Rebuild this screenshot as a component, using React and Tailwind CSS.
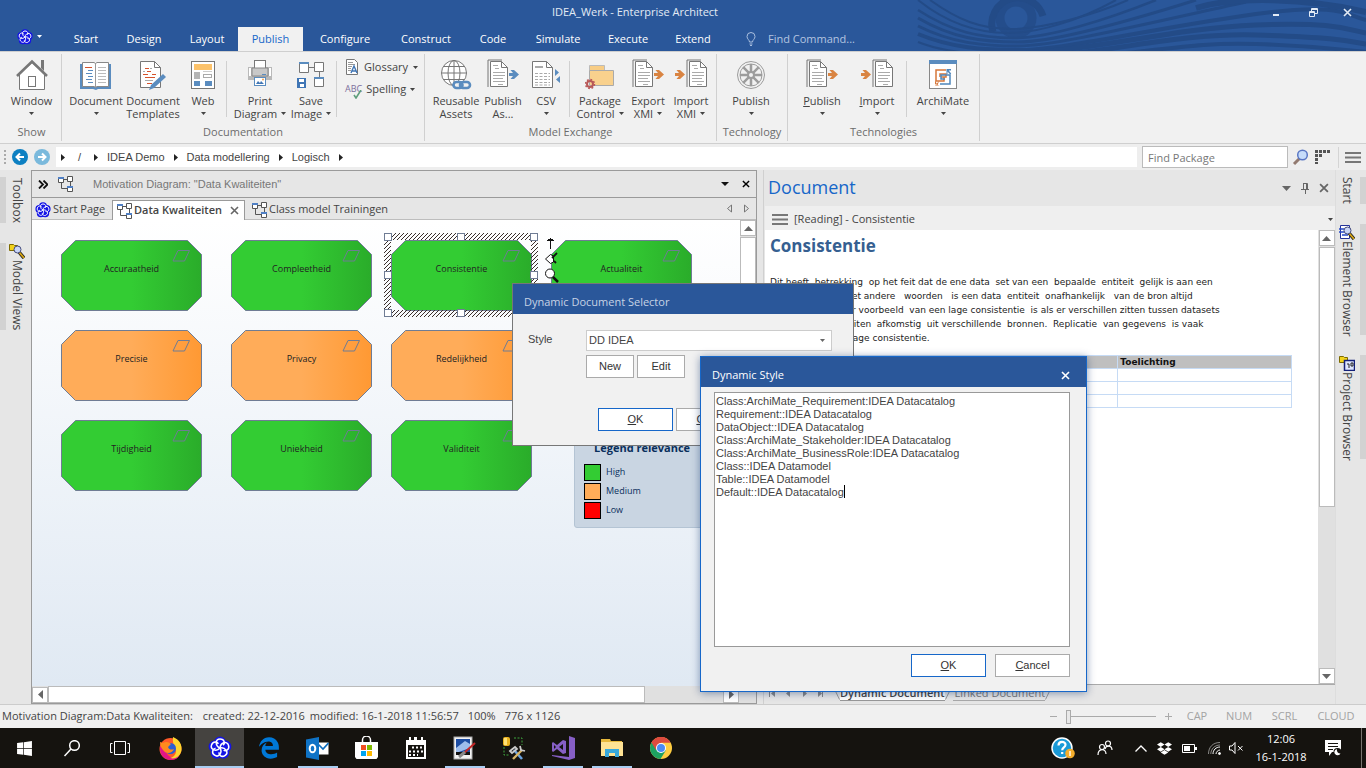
import { FaWindows, FaDropbox, FaEdgeLegacy } from 'react-icons/fa';

const TABS = [
    { name: 'Start', width: 'w-[52px]' },
    { name: 'Design', width: 'w-[64px]' },
    { name: 'Layout', width: 'w-[62px]' },
    { name: 'Publish', width: 'w-[65px]', active: true },
    { name: 'Configure', width: 'w-[84px]' },
    { name: 'Construct', width: 'w-[78px]' },
    { name: 'Code', width: 'w-[56px]' },
    { name: 'Simulate', width: 'w-[74px]' },
    { name: 'Execute', width: 'w-[66px]' },
    { name: 'Extend', width: 'w-[64px]' },
];

const NODES = [
    { name: 'Accuraatheid', color: 'green', pos: 'left-[29px] top-[20px]' },
    { name: 'Compleetheid', color: 'green', pos: 'left-[199px] top-[20px]' },
    { name: 'Consistentie', color: 'green', pos: 'left-[359px] top-[20px]' },
    { name: 'Actualiteit', color: 'green', pos: 'left-[519px] top-[20px]' },
    { name: 'Precisie', color: 'orange', pos: 'left-[29px] top-[110px]' },
    { name: 'Privacy', color: 'orange', pos: 'left-[199px] top-[110px]' },
    { name: 'Redelijkheid', color: 'orange', pos: 'left-[359px] top-[110px]' },
    { name: 'Tijdigheid', color: 'green', pos: 'left-[29px] top-[200px]' },
    { name: 'Uniekheid', color: 'green', pos: 'left-[199px] top-[200px]' },
    { name: 'Validiteit', color: 'green', pos: 'left-[359px] top-[200px]' },
];

const STYLE_LINES = [
    'Class:ArchiMate_Requirement:IDEA Datacatalog',
    'Requirement::IDEA Datacatalog',
    'DataObject::IDEA Datacatalog',
    'Class:ArchiMate_Stakeholder:IDEA Datacatalog',
    'Class:ArchiMate_BusinessRole:IDEA Datacatalog',
    'Class::IDEA Datamodel',
    'Table::IDEA Datamodel',
    'Default::IDEA Datacatalog',
];

const DOC_LINES = [
    'Dit heeft  betrekking  op het feit dat de ene data  set van een  bepaalde  entiteit  gelijk is aan een',
    'andere dataset. Met andere   woorden   is een data  entiteit  onafhankelijk   van de bron altijd',
    'gelijk is. Een ander voorbeeld  van een lage consistentie  is als er verschillen zitten tussen datasets',
    'waarin deze entiteiten  afkomstig  uit verschillende  bronnen.  Replicatie  van gegevens  is vaak',
    'een indicatie van lage consistentie.',
];

/* ---------- small drawings ---------- */

const Down = ({ className = 'text-[#444]' }) => (
    <svg width="5" height="3" viewBox="0 0 5 3" className={`inline-block shrink-0 ${className}`}>
        <path d="M0 0h5L2.5 3z" fill="currentColor" />
    </svg>
);

const Close = ({ size = 9, className = '' }) => (
    <svg width={size} height={size} viewBox="0 0 9 9" className={className}>
        <path d="M1 1l7 7M8 1l-7 7" stroke="currentColor" strokeWidth="1.6" />
    </svg>
);

const EaLogo = ({ size }) => (
    <svg width={size} height={size} viewBox="0 0 24 24">
        <g fill="#1414e6" stroke="#1414e6" strokeWidth="2">
            <circle cx="12" cy="6.5" r="5" />
            <circle cx="17.4" cy="10.4" r="5" />
            <circle cx="15.3" cy="16.8" r="5" />
            <circle cx="8.7" cy="16.8" r="5" />
            <circle cx="6.6" cy="10.4" r="5" />
        </g>
        <g fill="none" stroke="#fff" strokeWidth="1.5">
            <path d="M12 12C7 10 7 3 12 3s5 5 3 6" />
            <path d="M12 12c.4-5.4 7-7.500 8.500-2.800s-3.200 6.300-4.800 4.900" />
            <path d="M12 12c5.200-1.300 9.200 4.400 5.200 7.300s-6.900-1.100-6-3" />
            <path d="M12 12c2.800 4.600-1.400 10.100-5.400 7.200s-1.100-7 1-6.700" />
            <path d="M12 12c-3.500 4.100-10 1.800-8.500-2.900s6.300-3.200 6.700-1.100" />
        </g>
    </svg>
);

const DiagramIcon = ({ size = 16 }) => (
    <svg width={size} height={size} viewBox="0 0 16 16" className="shrink-0">
        <path d="M6 3.500h4M3.500 6v6.500h6M12.500 6v4" fill="none" stroke="#555" />
        <g fill="#fff" stroke="#555">
            <path d="M.5 1.500h5v5h-5zM9.500.5h5v5h-5zM9.500 10.500h5v5h-5z" />
        </g>
        <path d="M0 1h6v2H0zM9 10h6v2H9z" fill="#4f7fc4" />
    </svg>
);

const Paper = ({ x = 0 }) => (
    <g transform={`translate(${x} 0)`}>
        <path d="M1 28V1h14" fill="none" stroke="#777" />
        <path d="M3.500 2.500h11l6 6v19h-17z" fill="#fff" stroke="#777" />
        <path d="M14.500 2.500v6h6" fill="none" stroke="#777" />
        <path d="M6 6.500h5M8 9.500h4M6 13.500h12M6 16.500h12M6 19.500h10M6 22.500h12M11 25.500h5" stroke="#aaa" />
    </g>
);

const ArrowOut = ({ x, color }) => (
    <path transform={`translate(${x} 11)`} d="M0 3h4L1.500 0H5l5 4.500L5 9H1.500L4 6H0z" fill={color} />
);

const HouseIcon = () => (
    <svg width="32" height="32" viewBox="0 0 32 32">
        <path d="M25 1h3v11l-3-3z" fill="#777" />
        <path d="M3.500 15L16 3.500 28.500 15v15.500h-25z" fill="#fff" stroke="#777" />
        <path d="M1 17L16 2.500 31 17" fill="none" stroke="#777" strokeWidth="2.600" />
        <rect x="12.500" y="17.500" width="7" height="10" fill="#fff" stroke="#777" />
    </svg>
);

const BookIcon = () => (
    <svg width="32" height="32" viewBox="0 0 32 32">
        <path d="M0 5h31v25H18l-2 1-3-1H0z" fill="#5a8cbf" />
        <path d="M2.500 3.500H14l1.500 1 1.500-1h11.500v24H17l-1.500 1-1.500-1H2.500z" fill="#fff" stroke="#888" />
        <path d="M15.500 4v24" stroke="#999" />
        <path d="M5 8.500h7" stroke="#d6522c" />
        <path d="M8 11.500h5M6 14.500h6M8 17.500h5M6 20.500h6M8 23.500h5" stroke="#5a8cbf" />
        <path d="M18 8.500h8M18 11.500h8M18 14.500h8M18 17.500h8M18 20.500h8M18 23.500h8" stroke="#bbb" />
    </svg>
);

const TemplateIcon = () => (
    <svg width="28" height="32" viewBox="0 0 28 32">
        <path d="M1.500 2.500h14l6 6v20h-20z" fill="#fff" stroke="#777" />
        <path d="M15.500 2.500v6h6" fill="none" stroke="#777" />
        <path d="M6 9.500h4M8 12.500h4M4 15.500h5M13 15.500h4M6 18.500h10M8 24.500h5" stroke="#d6522c" />
        <path d="M4 12.500h2M11 9.500h2M6 21.500h8" stroke="#aaa" />
        <path d="M10 31l2-5 12-11 3 3-12 11z" fill="#5a8cbf" />
    </svg>
);

const WebIcon = () => (
    <svg width="24" height="32" viewBox="0 0 24 32">
        <rect x=".5" y="2.500" width="23" height="27" fill="#fff" stroke="#777" />
        <path d="M3 5h18v6H3z" fill="#fcc26a" />
        <path d="M3 13h6v7H3z" fill="#b5b5b5" />
        <rect x="12.500" y="15.500" width="8" height="3" fill="#fff" stroke="#aaa" />
        <path d="M12 12.500h9" stroke="#ccc" />
        <path d="M3 22h6v5H3zM14 22h7v5h-7z" fill="#5a8cbf" />
    </svg>
);

const PrinterIcon = () => (
    <svg width="26" height="32" viewBox="0 0 26 32">
        <path d="M1 8h24v13H1z" fill="#b9b9b9" />
        <path d="M2 9h2v8H2zM22 9h2v8h-2z" fill="#fff" />
        <rect x="7.500" y="1.500" width="11" height="8" fill="#fff" stroke="#777" />
        <path d="M5 9h16v8H5z" fill="#c8c8c8" stroke="#888" />
        <path d="M15 15.500h4" stroke="#5a8cbf" />
        <rect x="7.500" y="18.500" width="11" height="8" fill="#fff" stroke="#5a8cbf" />
        <path d="M9 25l2-3 2 2 1-2 3 3z" fill="#3f75b5" />
        <circle cx="16" cy="20.500" r="1" fill="#f3a04c" />
    </svg>
);

const SaveImageIcon = () => (
    <svg width="28" height="32" viewBox="0 0 28 32">
        <path d="M12 8.500h5M22.500 13v6" stroke="#777" />
        <path d="M2.500 3.500h9v10h-9zM17.500 3.500h9v9h-9zM17.500 18.500h9v9h-9z" fill="#fff" stroke="#777" />
        <path d="M2 3h10v2H2zM17 18h10v2H17z" fill="#5a8cbf" />
        <path d="M0 19h9v10H0z" fill="#3f75b5" />
        <path d="M2 20h5v3H2zM3 25h4v3H3z" fill="#fff" />
    </svg>
);

const GlobeIcon = () => (
    <svg width="32" height="32" viewBox="0 0 32 32">
        <g fill="none" stroke="#777" transform="translate(1 0)">
            <circle cx="13" cy="14" r="12.500" fill="#fff" />
            <ellipse cx="13" cy="14" rx="6" ry="12.500" />
            <path d="M13 1.500v25M.5 14h25M2.500 7.500h21M2.500 20.500h21" />
        </g>
        <g fill="none" stroke="#5a8cbf" strokeWidth="2.600">
            <rect x="13.500" y="23" width="9" height="6" rx="3" fill="#f1f1f1" />
            <rect x="20" y="23" width="10" height="6" rx="3" />
        </g>
    </svg>
);

const PublishIcon = ({ color = '#d98442' }) => (
    <svg width="32" height="32" viewBox="0 0 32 32">
        <Paper />
        <ArrowOut x="22" color={color} />
    </svg>
);

const ImportIcon = () => (
    <svg width="32" height="32" viewBox="0 0 32 32">
        <Paper x={11} />
        <ArrowOut x="0" color="#d98442" />
    </svg>
);

const CsvIcon = () => (
    <svg width="28" height="32" viewBox="0 0 28 32">
        <path d="M.5 2.500h14l6 6v20H.5z" fill="#fff" stroke="#777" />
        <path d="M14.500 2.500v6h6" fill="none" stroke="#777" />
        <path d="M3 8h8" stroke="#aaa" strokeWidth="2" />
        <path d="M3 14.500h15M3 17.500h15M3 20.500h15M3 23.500h15M3 26h15" stroke="#aaa" strokeDasharray="3 1.500" />
        <path d="M23 10l4 3.500-4 3.500zM28 17l-4 3.500 4 3.500z" fill="#5a8cbf" />
    </svg>
);

const PackageIcon = () => (
    <svg width="30" height="32" viewBox="0 0 30 32">
        <path d="M4.500 6.500h15v5h-15z" fill="#f8cd85" stroke="#bbb" />
        <path d="M4.500 11.500h24v15h-24z" fill="#f9d18d" stroke="#aaa" />
        <circle cx="5" cy="25" r="3" fill="none" stroke="#b85858" strokeWidth="2" />
        <circle cx="5" cy="25" r="4.500" fill="none" stroke="#b85858" strokeWidth="1.500" strokeDasharray="1.800 1.700" />
    </svg>
);

const WheelIcon = () => (
    <svg width="30" height="32" viewBox="0 0 30 32">
        <g fill="none" stroke="#9c9c9c">
            <circle cx="15" cy="16" r="13.500" />
            <circle cx="15" cy="16" r="11" />
            <path d="M15 5v22M4 16h22M7.200 8.200l15.600 15.600M22.800 8.200L7.200 23.800" strokeWidth="2.500" />
            <circle cx="15" cy="16" r="3" fill="#f1f1f1" strokeWidth="2" />
        </g>
    </svg>
);

const ArchiIcon = () => (
    <svg width="28" height="32" viewBox="0 0 28 32">
        <rect x=".5" y="1.500" width="27" height="28" fill="#fff" stroke="#888" />
        <path d="M0 1h28v4H0z" fill="#5a8cbf" />
        <path d="M17 11H7v11h8v-4M12 18h5v-3h-6v3" fill="none" stroke="#d6773a" strokeWidth="1.500" />
        <path d="M11 25h10v-9h-9v4h4" fill="none" stroke="#4f86bb" strokeWidth="1.500" />
        <path d="M17.500 10H22v1.500h-2.300l2.500 3-1 1-2.700-3V15h-1z" fill="#4f86bb" />
        <path d="M10.500 26.500H6V25M6 21v5.500l4-4.500-1.500 4.500z" fill="#d6773a" />
    </svg>
);

const GlossaryIcon = () => (
    <svg width="14" height="16" viewBox="0 0 14 16">
        <path d="M1.500.5h8l3 3v12h-11z" fill="#fff" stroke="#777" />
        <path d="M3 3.500h5M3 5.500h7M3 7.500h4M3 9.500h3M3 11.500h3" stroke="#999" />
        <path d="M6 14l3-7 3 7M7 12h4" stroke="#3f75b5" strokeWidth="1.400" fill="none" />
    </svg>
);

const BrowserIcon = ({ folder, lens, doc }) => (
    <svg width="16" height="16" viewBox="0 0 16 16" className="shrink-0">
        {folder && <path d="M.5 1.500h4l1 1h3v5h-8z" fill="#f2d21b" stroke="#7d6b00" />}
        {doc && <path d="M1.500 1.500h9v13h-9z" fill="#fff" stroke="#24339a" />}
        {doc && <path d="M0 5h5M0 8h5M3 11h6" stroke="#2448c8" strokeWidth="1.500" />}
        {!lens && <path d="M5.500 5.500h10v10h-10z" fill="#dfe6ff" stroke="#14207a" strokeWidth="1.500" />}
        {!lens && <path d="M8 9h2v4M12 8h2v3h-2z" fill="none" stroke="#222" />}
        {lens && <path d="M10 9l5 6" stroke="#222" strokeWidth="3.500" />}
        {lens && <path d="M10 9l5 6" stroke="#d8a512" strokeWidth="1.800" />}
        {lens && <circle cx="8.500" cy="6.500" r="3.500" fill="#c9d6f7" stroke="#444b7c" />}
    </svg>
);

/* ---------- ribbon ---------- */

const RibbonItem = ({ width, icon, line1, line2, arrow, hotkey }) => (
    <button type="button" className={`flex flex-col items-center ${width}`}>
        <span className="flex h-[32px] items-center">{icon}</span>
        <span className="mt-[3px] h-[13px] whitespace-nowrap leading-[13px]">
            {hotkey ? <><u>{line1[0]}</u>{line1.slice(1)}</> : line1}
        </span>
        <span className="flex h-[13px] items-center gap-1 whitespace-nowrap leading-[13px]">
            {line2}
            {arrow && <Down />}
        </span>
    </button>
);

const RibbonGroup = ({ label, width, children }) => (
    <div className={`my-[2px] flex flex-col border-r border-[#d0d0d0] ${width}`}>
        <div className="flex pt-[5px]">{children}</div>
        <div className="mt-[5px] text-center leading-[14px] text-[#6c6c6c]">{label}</div>
    </div>
);

const Divider = ({ className = '' }) => <div className={`mt-[2px] h-[56px] w-px bg-[#d0d0d0] ${className}`} />;

const Ribbon = () => (
    <section className="flex h-[93px] border-y border-[#cfcfcf] bg-[#f1f1f1] text-[#444]">
        <RibbonGroup label="Show" width="w-[62px] pl-[2px]">
            <RibbonItem width="w-full" icon={<HouseIcon />} line1="Window" arrow />
        </RibbonGroup>
        <RibbonGroup label="Documentation" width="w-[363px]">
            <RibbonItem width="ml-[6px] w-[56px]" icon={<BookIcon />} line1="Document" arrow />
            <RibbonItem width="w-[58px]" icon={<TemplateIcon />} line1="Document" line2="Templates" />
            <RibbonItem width="w-[42px]" icon={<WebIcon />} line1="Web" arrow />
            <Divider className="ml-[2px] mr-[3px]" />
            <RibbonItem width="w-[60px]" icon={<PrinterIcon />} line1="Print" line2="Diagram" arrow />
            <RibbonItem width="w-[42px]" icon={<SaveImageIcon />} line1="Save" line2="Image" arrow />
            <Divider className="mx-[4px]" />
            <div className="ml-1 flex flex-col gap-[6px]">
                <button type="button" className="flex h-4 items-center gap-[5px] leading-4">
                    <GlossaryIcon /> Glossary <Down />
                </button>
                <button type="button" className="flex h-4 items-center gap-[4px] leading-4">
                    <span className="relative text-[9px] leading-[12px] text-[#7c6f9c]">
                        ABC
                        <svg width="9" height="9" viewBox="0 0 9 9" className="absolute right-0 top-[7px]">
                            <path d="M1 5l2 3 5-8" fill="none" stroke="#5e9e7c" strokeWidth="1.600" />
                        </svg>
                    </span>
                    Spelling <Down />
                </button>
            </div>
        </RibbonGroup>
        <RibbonGroup label="Model Exchange" width="w-[292px]">
            <RibbonItem width="ml-[4px] w-[54px]" icon={<GlobeIcon />} line1="Reusable" line2="Assets" />
            <RibbonItem width="w-[40px]" icon={<PublishIcon color="#5a8cbf" />} line1="Publish" line2="As..." />
            <RibbonItem width="w-[46px]" icon={<CsvIcon />} line1="CSV" arrow />
            <Divider className="mr-[3px]" />
            <RibbonItem width="w-[54px]" icon={<PackageIcon />} line1="Package" line2="Control" arrow />
            <RibbonItem width="w-[42px]" icon={<PublishIcon />} line1="Export" line2="XMI" arrow />
            <RibbonItem width="w-[44px]" icon={<ImportIcon />} line1="Import" line2="XMI" arrow />
        </RibbonGroup>
        <RibbonGroup label="Technology" width="w-[71px]">
            <RibbonItem width="w-[68px]" icon={<WheelIcon />} line1="Publish" arrow />
        </RibbonGroup>
        <RibbonGroup label="Technologies" width="w-[192px]">
            <RibbonItem width="ml-[6px] w-[56px]" icon={<PublishIcon />} line1="Publish" arrow hotkey />
            <RibbonItem width="w-[54px]" icon={<ImportIcon />} line1="Import" arrow hotkey />
            <Divider className="ml-[2px]" />
            <RibbonItem width="w-[72px]" icon={<ArchiIcon />} line1="ArchiMate" arrow />
        </RibbonGroup>
    </section>
);

const TitleBar = () => (
    <header className="relative bg-[#2a579a] text-[#e3ebf5]">
        <svg width="460" height="51" viewBox="0 0 460 51" className="absolute right-0 top-0">
            <g fill="none" stroke="#234b87">
                <circle cx="110" cy="18" r="16" strokeWidth="9" opacity=".8" />
                <path d="M87 32a26 26 0 0 1 50-16" strokeWidth="7" />
                <path d="M12 0c30 24 60 33 90 33s70-12 108-33" strokeWidth="2" />
                <path d="M24 0c28 20 50 29 82 29S190 14 222 0" strokeWidth="2" />
                <path d="M12 10c34 22 62 28 96 28S200 20 250 0" strokeWidth="2.500" />
                <path d="M12 18c34 20 64 24 100 24S220 22 290 0" strokeWidth="3" />
                <path d="M12 26c34 17 64 20 100 20S230 26 340 2" strokeWidth="3" />
                <path d="M12 34c34 14 64 16 104 16S260 26 350 14s90 2 110 6" strokeWidth="4" />
                <path d="M120 53C190 50 270 28 350 25s90 4 110 8" strokeWidth="5" />
                <path d="M150 55c70-6 130-22 200-20s90 5 110 9" strokeWidth="5" />
                <path d="M190 56c70-6 100-14 160-12s90 6 110 8" strokeWidth="4" />
                <path d="M290 8C330-4 400-2 460 12" strokeWidth="6" />
                <path d="M12 42c20 8 40 10 60 12" strokeWidth="2" />
            </g>
        </svg>
        <div className="relative flex h-[27px] items-center">
            <h1 className="flex-1 pb-[2px] text-center">IDEA_Werk - Enterprise Architect</h1>
            <div className="flex w-[96px] items-center pb-[2px]">
                <button type="button" aria-label="Minimize" className="flex w-[24px] justify-start pl-[3px] pt-1">
                    <svg width="6" height="2"><rect width="6" height="2" fill="currentColor" /></svg>
                </button>
                <button type="button" aria-label="Restore" className="ml-[7px] w-[24px]">
                    <svg width="9" height="9" viewBox="0 0 9 9" className="mx-auto">
                        <path d="M2.500 3V.5h6v5H6M2.500 1.500h6M.5 3.500h5v5h-5zM.5 4.500h5" fill="none" stroke="currentColor" />
                    </svg>
                </button>
                <button type="button" aria-label="Close" className="ml-[15px] w-[20px]"><Close className="ml-[3px]" /></button>
            </div>
        </div>
        <nav className="relative flex h-[24px]">
            <button type="button" aria-label="Application menu" className="flex w-[60px] items-center gap-[4px] pb-[5px] pl-[17px] text-white">
                <EaLogo size={16} /><Down className="text-white" />
            </button>
            {TABS.map((tab) => (
                <a key={tab.name} href="#" className={`flex items-center justify-center ${tab.width} ${tab.active ? 'bg-[#f1f1f1] text-[#1667c9]' : 'text-white'}`}>
                    {tab.name}
                </a>
            ))}
            <label className="ml-[20px] flex items-center gap-[11px]">
                <svg width="12" height="14" viewBox="0 0 12 14">
                    <path d="M4.500 10C4.500 8 2 7 2 4.500a4 4 0 0 1 8 0C10 7 7.500 8 7.500 10zM4.500 12h3M5 13.500h2" fill="none" stroke="#a9bfdf" />
                </svg>
                <input type="text" aria-label="Find Command" placeholder="Find Command..." className="w-[140px] bg-transparent outline-none placeholder:text-[#b4c5e0] placeholder:opacity-100" />
            </label>
        </nav>
    </header>
);

const CrumbArrow = () => (
    <svg width="4" height="7" viewBox="0 0 4 7" className="shrink-0"><path d="M0 0l4 3.500L0 7z" fill="#222" /></svg>
);

const RoundArrow = ({ color, flip }) => (
    <svg width="16" height="16" viewBox="0 0 16 16" className={flip ? 'rotate-180' : ''}>
        <circle cx="8" cy="8" r="8" fill={color} />
        <path d="M12 8H5M8 4.500L4.500 8 8 11.500" fill="none" stroke="#fff" strokeWidth="2" />
    </svg>
);

const Breadcrumbs = () => (
    <div className="flex h-[26px] items-center bg-[#eee] font-['Liberation_Sans',sans-serif] text-[#444]">
        <svg width="3" height="15" viewBox="0 0 3 15" className="ml-[4px]">
            <path d="M1 0v15" stroke="#aaa" strokeWidth="2" strokeDasharray="2 2" />
        </svg>
        <button type="button" aria-label="Back" className="ml-[5px]"><RoundArrow color="#0d80c2" /></button>
        <button type="button" aria-label="Forward" className="ml-[6px]"><RoundArrow color="#7ab9dc" flip /></button>
        <nav className="ml-[6px] flex h-[20px] flex-1 items-center gap-[9px] bg-white pl-[5px]">
            <CrumbArrow />
            <span className="mx-[4px]">/</span>
            <CrumbArrow />
            <a href="#">IDEA Demo</a>
            <CrumbArrow />
            <a href="#">Data modellering</a>
            <CrumbArrow />
            <a href="#">Logisch</a>
            <CrumbArrow />
        </nav>
        <input type="text" aria-label="Find Package" placeholder="Find Package" className="ml-[5px] h-[22px] w-[146px] border border-[#bbb] bg-white px-[5px] font-['Open_Sans',sans-serif] outline-none placeholder:text-[#777] placeholder:opacity-100" />
        <button type="button" aria-label="Search" className="ml-[4px]">
            <svg width="17" height="17" viewBox="0 0 17 17">
                <path d="M2 15l6-6" stroke="#927a70" strokeWidth="3" />
                <circle cx="10.500" cy="6" r="4.800" fill="#c6dcfa" stroke="#5a77c4" strokeWidth="1.500" />
            </svg>
        </button>
        <button type="button" aria-label="Grid" className="ml-[6px]">
            <svg width="16" height="16" viewBox="0 0 16 16" fill="#555">
                <path d="M0 1h3v3H0zM4 1h3v3H4zM8 1h3v3H8zM12 1h3v3h-3zM0 5h3v3H0zM4 5h3v3H4zM0 9h3v3H0zM0 13h3v2H0z" />
            </svg>
        </button>
        <button type="button" aria-label="Menu" className="ml-[7px] mr-[5px] border-l border-[#d4d4d4] py-[5px] pl-[6px]">
            <svg width="16" height="11" viewBox="0 0 16 11"><path d="M0 1h16M0 5.500h16M0 10h16" stroke="#777" strokeWidth="2" /></svg>
        </button>
    </div>
);

/* ---------- side strips ---------- */

const SideTab = ({ label, icon, side, className }) => (
    <button type="button" className={`relative flex w-full flex-col items-center gap-px ${className}`}>
        <span className={`absolute top-0 h-full w-[6px] bg-[#d2d2d2] ${side === 'left' ? 'left-0' : 'right-0'}`} />
        {icon}
        <span className="whitespace-nowrap text-[12px] leading-[14px] [writing-mode:vertical-rl]">{label}</span>
    </button>
);

/* ---------- diagram ---------- */

const Node = ({ name, color, pos }) => (
    <div className={`absolute ${pos} h-[71px] w-[141px]`}>
        <svg width="141" height="71" viewBox="0 0 141 71" className="absolute inset-0">
            <path
                d="M14.500.5h112l14 14v42l-14 14h-112l-14-14v-42z"
                fill={color === 'green' ? 'url(#greenFill)' : 'url(#orangeFill)'}
                stroke="#6f7c94"
            />
            <path d="M117 10.500h11.500l-5 10.500H112z" fill="none" stroke="#6f7c94" />
        </svg>
        <div className="relative pt-[22px] text-center text-[9px] leading-[13px] text-[#222]">{name}</div>
    </div>
);

const Handle = ({ className }) => <span className={`absolute size-[8px] border border-[#6f7c94] bg-white ${className}`} />;

const Selection = () => (
    <div className="absolute left-[352px] top-[13px] h-[84px] w-[154px]">
        <svg width="154" height="84" viewBox="0 0 154 84" className="absolute inset-0">
            <path d="M0 0h154v84H0zM7 7v70h140V7z" fillRule="evenodd" fill="url(#hatch)" />
        </svg>
        <Handle className="left-0 top-0" />
        <Handle className="left-[73px] top-0" />
        <Handle className="right-0 top-0" />
        <Handle className="left-0 top-[38px]" />
        <Handle className="right-0 top-[38px]" />
        <Handle className="bottom-0 left-0" />
        <Handle className="bottom-0 left-[73px]" />
        <svg width="16" height="50" viewBox="0 0 16 50" className="absolute left-[160px] top-[3px]" fill="none" stroke="#111">
            <path d="M6.500 13V2M3 4.500h7M4 3.500h5" />
            <path d="M6.500 18.500l-5 4.500 5 4.500 3-1.500v-6z" fill="#fff" />
            <path d="M8 22l5-5M10 25l2 2" strokeWidth="1.800" />
            <circle cx="6" cy="37.500" r="4.500" fill="#fff" />
            <path d="M9 41l5 5" strokeWidth="2.500" />
        </svg>
    </div>
);

const LEGEND = [
    { label: 'High', swatch: 'bg-[#33cc33]' },
    { label: 'Medium', swatch: 'bg-[#ffac59]' },
    { label: 'Low', swatch: 'bg-[#ff0000]' },
];

const Legend = () => (
    <div className="absolute left-[542px] top-[218px] h-[90px] w-[136px] rounded-[3px] border border-[#b4c4d4] bg-[#c9d5e2] pl-[9px] text-[#0a2f5c]">
        <div className="mb-[6px] pl-[10px] text-[11px] font-bold leading-[18px]">Legend relevance</div>
        {LEGEND.map((item) => (
            <div key={item.label} className="mt-[1px] flex items-center gap-[5px] text-[9px] leading-[18px]">
                <span className={`size-[17px] border border-black ${item.swatch}`} />
                {item.label}
            </div>
        ))}
    </div>
);

const ScrollButton = ({ dir }) => (
    <button type="button" aria-label={`Scroll ${dir}`} className="flex size-[16px] shrink-0 items-center justify-center border border-[#bbb] bg-white">
        <svg width="9" height="9" viewBox="0 0 9 9" fill="#666">
            {dir === 'up' && <path d="M0 7h9L4.500 2z" />}
            {dir === 'down' && <path d="M0 2h9L4.500 7z" />}
            {dir === 'left' && <path d="M7 0v9L2 4.500z" />}
            {dir === 'right' && <path d="M2 0v9l5-4.500z" />}
        </svg>
    </button>
);

const DiagramPanel = () => (
    <main className="flex w-[726px] shrink-0 flex-col border-x border-t border-[#9a9a9a] bg-[#e6e6e6]">
        <div className="flex h-[27px] items-center border-b border-[#9a9a9a] px-[6px]">
            <svg width="10" height="9" viewBox="0 0 10 9" fill="none" stroke="#111" strokeWidth="1.800">
                <path d="M1 .5l4 4-4 4M5.500.5l4 4-4 4" />
            </svg>
            <span className="ml-[10px]"><DiagramIcon /></span>
            <span className="ml-[19px] flex-1 font-['Liberation_Sans',sans-serif] text-[#777]">Motivation Diagram: "Data Kwaliteiten"</span>
            <svg width="8" height="4" viewBox="0 0 8 4" className="mr-[13px]"><path d="M0 0h8L4 4z" fill="#111" /></svg>
            <button type="button" aria-label="Close diagram"><Close size={8} className="text-black" /></button>
        </div>
        <div className="flex h-[22px] items-stretch border-b border-[#bdbdbd] text-[#444]">
            <a href="#" className="flex w-[80px] items-center gap-[2px] pl-[3px] pt-[2px]"><EaLogo size={16} /> Start Page</a>
            <a href="#" className="-mb-px mt-[2px] flex w-[133px] items-center gap-[1px] border border-b-0 border-[#9a9a9a] bg-white pl-[4px] font-semibold">
                <DiagramIcon /> Data Kwaliteiten
                <Close size={9} className="ml-auto mr-[5px] text-[#666]" />
            </a>
            <a href="#" className="flex flex-1 items-center gap-[1px] pl-[7px] pt-[2px]"><DiagramIcon /> Class model Trainingen</a>
            <svg width="22" height="9" viewBox="0 0 22 9" className="mr-[7px] mt-[6px]" fill="none" stroke="#777">
                <path d="M4.500 1v7l-4-3.500zM17.500 1v7l4-3.500z" />
            </svg>
        </div>
        <div className="flex min-h-0 flex-1">
            <div className="relative flex-1 overflow-hidden bg-linear-to-b from-white to-[#e0e9f3]">
                <svg width="0" height="0" className="absolute">
                    <defs>
                        <linearGradient id="greenFill">
                            <stop offset=".5" stopColor="#33cc33" />
                            <stop offset="1" stopColor="#2aac2a" />
                        </linearGradient>
                        <linearGradient id="orangeFill">
                            <stop offset=".5" stopColor="#ffac59" />
                            <stop offset="1" stopColor="#ff9933" />
                        </linearGradient>
                        <pattern id="hatch" width="4" height="4" patternUnits="userSpaceOnUse">
                            <path d="M-1 1l2-2M0 4l4-4M3 5l2-2" stroke="#3a2e2a" strokeWidth="1" />
                        </pattern>
                    </defs>
                </svg>
                {NODES.map((node) => <Node key={node.name} {...node} />)}
                <Selection />
                <Legend />
            </div>
            <div className="flex w-[16px] flex-col bg-[#e0e0e0]">
                <ScrollButton dir="up" />
                <div className="mt-[1px] flex-1 border border-[#bbb] bg-white" />
            </div>
        </div>
        <div className="flex h-[18px] items-center border-b border-[#9a9a9a] bg-[#e0e0e0]">
            <ScrollButton dir="left" />
            <div className="h-[17px] w-[597px] border border-[#bbb] bg-white" />
            <span className="ml-auto mr-[17px]"><ScrollButton dir="right" /></span>
        </div>
    </main>
);

/* ---------- document panel ---------- */

const TabEdge = ({ d }) => (
    <svg width="8" height="15" viewBox="0 0 8 15" className="shrink-0" fill="none" stroke="#999"><path d={d} /></svg>
);

const DocumentPanel = () => (
    <section className="flex min-w-0 flex-1 flex-col bg-[#e6e6e6] pl-px">
        <div className="flex h-[36px] items-center pl-[3px] pr-[6px] text-[#666]">
            <h2 className="flex-1 pb-[2px] text-[18px] text-[#1667c9]">Document</h2>
            <svg width="9" height="5" viewBox="0 0 9 5"><path d="M0 0h9L4.500 5z" fill="currentColor" /></svg>
            <svg width="8" height="11" viewBox="0 0 8 11" className="ml-[10px]" fill="none" stroke="currentColor">
                <path d="M2 .5h4.500v5.500M2.500.5v5.500M0 6.500h8M4.500 7v4M5.500.5v5.500" />
            </svg>
            <button type="button" aria-label="Close panel" className="ml-[10px]"><Close size={10} /></button>
        </div>
        <div className="flex h-[24px] items-center gap-[6px] bg-[#efefef] pl-[7px] pr-[2px] pt-[2px] text-[#444]">
            <svg width="16" height="11" viewBox="0 0 16 11"><path d="M0 1h16M0 5.500h16M0 10h16" stroke="#777" strokeWidth="2" /></svg>
            <span className="flex-1">[Reading] - Consistentie</span>
            <Down />
        </div>
        <div className="flex min-h-0 flex-1 border-b border-[#aaa] bg-white">
            <div className="min-w-0 flex-1 overflow-hidden pl-[5px] pr-[26px]">
                <h3 className="mt-[4px] text-[17px] font-bold leading-[24px] text-[#365f91]">Consistentie</h3>
                <div className="mt-[17px] font-['DejaVu_Sans',sans-serif] text-[9px] leading-[14px] text-[#222]">
                    {DOC_LINES.map((line) => <p key={line} className="whitespace-pre">{line}</p>)}
                </div>
                <table className="mt-[10px] w-full table-fixed border-collapse font-['DejaVu_Sans',sans-serif] text-[9px] leading-[12px]">
                    <thead>
                        <tr className="bg-[#bfbfbf] text-left text-[#111]">
                            <th className="border border-[#c6dbf5] px-[2px]">Naam</th>
                            <th className="border border-[#c6dbf5] px-[2px]">Waarde</th>
                            <th className="border border-[#c6dbf5] px-[2px]">Toelichting</th>
                        </tr>
                    </thead>
                    <tbody>
                        {[1, 2, 3].map((row) => (
                            <tr key={row}>
                                <td className="h-[13px] border border-[#c6dbf5]" />
                                <td className="border border-[#c6dbf5]" />
                                <td className="border border-[#c6dbf5]" />
                            </tr>
                        ))}
                    </tbody>
                </table>
            </div>
            <div className="flex w-[17px] flex-col items-center bg-[#e0e0e0]">
                <ScrollButton dir="up" />
                <div className="mt-[1px] h-[260px] w-[16px] border border-[#bbb] bg-white" />
                <span className="mt-auto"><ScrollButton dir="down" /></span>
            </div>
        </div>
        <div className="flex h-[19px] items-start pl-[3px] text-[#777]">
            <svg width="56" height="16" viewBox="0 0 56 16" className="mr-[8px]" fill="#888">
                <path d="M1 5h1v7H1zM7 5v7L3 8.500zM22 5v7l-4-3.500zM35 5v7l4-3.500zM50 5v7l4-3.500zM54 5h1v7h-1z" />
            </svg>
            <TabEdge d="M.5 0L7.500 14.500" />
            <a href="#" className="border-b border-[#999] bg-white font-semibold leading-[15px] text-[#444]">Dynamic Document</a>
            <TabEdge d="M.5 14.500L7.500 0" />
            <a href="#" className="border-b border-[#aaa] pl-[2px] leading-[15px]">Linked Document</a>
            <TabEdge d="M.5 14.500L7.500 0" />
        </div>
    </section>
);

/* ---------- dialogs ---------- */

const DialogButton = ({ label, primary, hotkey, className }) => (
    <button type="button" className={`h-[23px] border bg-white text-[#333] ${primary ? 'border-[#1667c9]' : 'border-[#aaa]'} ${className}`}>
        {hotkey ? <><u>{label[0]}</u>{label.slice(1)}</> : label}
    </button>
);

const SelectorDialog = () => (
    <div role="dialog" aria-label="Dynamic Document Selector" className="absolute left-[512px] top-[283px] w-[342px] border border-[#777] bg-[#f1f1f1] font-['Liberation_Sans',sans-serif]">
        <div className="flex h-[30px] items-center bg-[#2a579a] pl-[11px] pt-[6px] font-['Open_Sans',sans-serif] text-[#c7d3e5]">Dynamic Document Selector</div>
        <div className="flex items-start pl-[15px] pr-[21px] pt-[16px] text-[#444]">
            <label htmlFor="doc-style" className="w-[58px] pt-[2px] leading-[14px]">Style</label>
            <div className="relative flex-1">
                <select id="doc-style" className="h-[21px] w-full appearance-none border border-[#ccc] bg-white px-[2px]">
                    <option>DD IDEA</option>
                </select>
                <Down className="absolute right-[7px] top-[9px] text-[#666]" />
            </div>
        </div>
        <div className="mt-[4px] flex gap-[3px] pl-[73px]">
            <DialogButton label="New" className="w-[48px]" />
            <DialogButton label="Edit" className="w-[48px]" />
        </div>
        <div className="mb-[14px] mt-[30px] flex gap-[3px] pl-[85px]">
            <DialogButton label="OK" primary hotkey className="w-[75px]" />
            <DialogButton label="Cancel" hotkey className="w-[75px]" />
        </div>
    </div>
);

const StyleDialog = () => (
    <div role="dialog" aria-label="Dynamic Style" className="absolute left-[700px] top-[356px] w-[387px] border border-[#1667c9] bg-[#f1f1f1] font-['Liberation_Sans',sans-serif] shadow-[0_1px_8px_rgba(0,40,100,0.45)]">
        <div className="flex h-[30px] items-center justify-between bg-[#2a579a] pl-[11px] pr-[16px] pt-[6px] font-['Open_Sans',sans-serif] text-white">
            Dynamic Style
            <button type="button" aria-label="Close"><Close size={9} /></button>
        </div>
        <div className="px-[13px] pb-[14px] pt-[5px]">
            <div className="relative">
                <textarea
                    aria-label="Style mapping"
                    defaultValue={STYLE_LINES.join('\n')}
                    spellCheck={false}
                    className="block h-[255px] w-[356px] resize-none border border-[#999] bg-white px-px py-[2px] text-[11px] leading-[13px] text-[#444] outline-none"
                />
                <span className="absolute left-[130px] top-[93px] h-[13px] w-px bg-black" />
            </div>
            <div className="mr-[3px] mt-[7px] flex justify-end gap-[9px]">
                <DialogButton label="OK" primary hotkey className="w-[75px]" />
                <DialogButton label="Cancel" hotkey className="w-[75px]" />
            </div>
        </div>
    </div>
);

/* ---------- bottom bars ---------- */

const StatusBar = () => (
    <footer className="flex h-[24px] items-center border-t border-[#ccc] bg-[#f0f0f0] pl-[2px] text-[#444]">
        <span>Motivation Diagram:Data Kwaliteiten:</span>
        <span className="ml-[10px]">created: 22-12-2016</span>
        <span className="ml-[5px]">modified: 16-1-2018 11:56:57</span>
        <span className="ml-[9px]">100%</span>
        <span className="ml-[9px]">776 x 1126</span>
        <div className="ml-auto flex items-center text-[#a3a3a3]">
            <svg width="7" height="7" viewBox="0 0 7 7"><path d="M0 3.500h7" stroke="#aaa" /></svg>
            <input
                type="range"
                aria-label="Zoom"
                min="0"
                max="100"
                defaultValue="0"
                className="mx-[9px] h-[14px] w-[90px] appearance-none bg-transparent bg-linear-to-b from-[#aaa] to-[#aaa] bg-[length:100%_1px] bg-center bg-no-repeat [&::-webkit-slider-thumb]:h-[14px] [&::-webkit-slider-thumb]:w-[5px] [&::-webkit-slider-thumb]:appearance-none [&::-webkit-slider-thumb]:border [&::-webkit-slider-thumb]:border-[#aaa] [&::-webkit-slider-thumb]:bg-[#e8e8e8]"
            />
            <svg width="7" height="7" viewBox="0 0 7 7"><path d="M0 3.500h7M3.500 0v7" stroke="#aaa" /></svg>
            <span className="w-[50px] text-center">CAP</span>
            <span className="w-[34px] text-center">NUM</span>
            <span className="w-[57px] text-center">SCRL</span>
            <span className="mr-[7px] w-[46px] text-center">CLOUD</span>
        </div>
    </footer>
);

const FirefoxIcon = () => (
    <svg width="23" height="23" viewBox="0 0 23 23">
        <circle cx="11.500" cy="12" r="11" fill="#ff5a2a" />
        <path d="M1 9C0 18 6 23 12 23c3 0 6-1 8-4-6 3-12 1-13-5z" fill="#e31587" />
        <path d="M14 0c7 3 9 8 8.500 13S17 23 11 21c4-1 6-4 6-7 0-4-4-6-3-14z" fill="#ffd52e" />
        <circle cx="11.500" cy="11.500" r="5.500" fill="#2c5ed3" />
        <path d="M1 5l3 1c3-2 6-1 8 1l-3 3c1 3 4 3 6 2-1 4-8 6-11 1C2 11 1 8 1 5z" fill="#ff8a1e" />
    </svg>
);

const OutlookIcon = () => (
    <svg width="23" height="23" viewBox="0 0 23 23">
        <path d="M12 5.500h10.500v12H12z" fill="#fff" />
        <path d="M12 7l5 5 5.500-6" fill="none" stroke="#0a6bbd" strokeWidth="1.600" />
        <path d="M0 2.500L13 0v23L0 20.500z" fill="#0f73c6" />
        <ellipse cx="6.500" cy="11.500" rx="2.800" ry="3.800" fill="none" stroke="#fff" strokeWidth="2" />
    </svg>
);

const StoreIcon = () => (
    <svg width="23" height="24" viewBox="0 0 23 24">
        <path d="M7.500 7V4a4 4 0 0 1 8 0v3" fill="none" stroke="#fff" strokeWidth="1.500" />
        <path d="M0 6h23v15l-1.500 2h-20L0 21z" fill="#fff" />
        <path d="M6 9h5v5H6z" fill="#f25022" />
        <path d="M12 9h5v5h-5z" fill="#7fba00" />
        <path d="M6 15h5v5H6z" fill="#00a4ef" />
        <path d="M12 15h5v5h-5z" fill="#ffb900" />
    </svg>
);

const CalendarIcon = () => (
    <svg width="20" height="24" viewBox="0 0 20 24">
        <path d="M0 4h3V1h2v3h3V1h3v3h4V1h2v3h3v19H0z" fill="#fff" />
        <path d="M2 9h16v12H2z" fill="#15130f" />
        <path d="M6 11.500h11M3 15.500h14M3 19h9" stroke="#fff" strokeWidth="2" strokeDasharray="2 2" />
    </svg>
);

const PaintIcon = () => (
    <svg width="23" height="24" viewBox="0 0 23 24">
        <rect x="1" y="1" width="18" height="22" fill="#f3f3f3" stroke="#aaa" />
        <path d="M3 3h14v16H3z" fill="#1d4da3" />
        <path d="M3 12L12 5l5 3v4L3 17z" fill="#9dbdec" />
        <path d="M3 16h14v3H3z" fill="#111" />
        <path d="M22 7L11 17" stroke="#c52727" strokeWidth="2" />
        <path d="M12 16l-6 5" stroke="#888" strokeWidth="3" />
    </svg>
);

const ToolsIcon = () => (
    <svg width="24" height="24" viewBox="0 0 24 24">
        <path d="M12 2h8v7M2 11v8h6" fill="none" stroke="#3fa73f" strokeDasharray="2 1.500" />
        <rect x="1" y="1" width="7" height="9" rx="2" fill="#eab31f" />
        <path d="M2 2h3v7H2z" fill="#ffe177" />
        <path d="M12 14l8 9" stroke="#6aa3e0" strokeWidth="2.600" />
        <path d="M20 14l-9 9" stroke="#d8b566" strokeWidth="2.400" />
        <path d="M8 15l5-4 2 2-5 4zM18 10l1 4 4 1" fill="none" stroke="#ccc" strokeWidth="1.800" />
    </svg>
);

const StudioIcon = () => (
    <svg width="24" height="24" viewBox="0 0 24 24" fill="#865fc5">
        <path d="M18 0l6 2v20l-6 2-17-4v-1l17 2z" />
        <path d="M2 6l4 3 6-5 3 1v12l-3 1-6-5-4 3-1-1V7zm1 3v4l2-2zm9-1l-4 3 4 3z" fillRule="evenodd" />
    </svg>
);

const ExplorerIcon = () => (
    <svg width="22" height="20" viewBox="0 0 22 20">
        <path d="M0 1h9l1 2h11v3H0z" fill="#e8b93c" />
        <path d="M0 4h22v14H0z" fill="#ffe394" />
        <path d="M4 11h14v8h-4v-4H8v4H4z" fill="#39a9dc" />
    </svg>
);

const ChromeIcon = () => (
    <svg width="22" height="22" viewBox="0 0 22 22">
        <circle cx="11" cy="11" r="11" fill="#ffcd41" />
        <path d="M11 11L1.500 5.500A11 11 0 0 1 20.500 5.500H11z" fill="#dd4b3e" />
        <path d="M11 11L1.500 5.500A11 11 0 0 0 10.500 22L15.800 13.500z" fill="#1da261" />
        <path d="M1.500 5.500A11 11 0 0 1 20.500 5.500H11L6 13z" fill="#dd4b3e" />
        <circle cx="11" cy="11" r="5" fill="#fff" />
        <circle cx="11" cy="11" r="4" fill="#4c8bf5" />
    </svg>
);

const APPS = [
    { name: 'Firefox', icon: <FirefoxIcon /> },
    { name: 'Enterprise Architect', icon: <EaLogo size={24} />, active: true },
    { name: 'Edge', icon: <FaEdgeLegacy size={22} color="#0078d7" /> },
    { name: 'Outlook', icon: <OutlookIcon />, open: true },
    { name: 'Store', icon: <StoreIcon /> },
    { name: 'Calendar', icon: <CalendarIcon /> },
    { name: 'Paint', icon: <PaintIcon />, open: true },
    { name: 'Database Tools', icon: <ToolsIcon /> },
    { name: 'Visual Studio', icon: <StudioIcon />, open: true },
    { name: 'File Explorer', icon: <ExplorerIcon />, open: true },
    { name: 'Chrome', icon: <ChromeIcon /> },
];

const Taskbar = () => (
    <div className="flex h-[40px] items-stretch bg-[#15130f] text-white">
        <button type="button" aria-label="Windows" className="flex w-[48px] items-center justify-center"><FaWindows size={17} /></button>
        <button type="button" aria-label="Search" className="flex w-[48px] items-center justify-center">
            <svg width="16" height="17" viewBox="0 0 16 17" fill="none" stroke="#fff" strokeWidth="1.500">
                <circle cx="10.500" cy="5.500" r="4.800" /><path d="M7 9L.5 16" />
            </svg>
        </button>
        <button type="button" aria-label="Task view" className="flex w-[48px] items-center justify-center">
            <svg width="20" height="14" viewBox="0 0 20 14" fill="none" stroke="#fff">
                <path d="M4.500.5h11v13h-11zM2.500 2.500h-2v9h2M17.500 2.500h2v9h-2" />
            </svg>
        </button>
        <div className="ml-[2px] flex">
            {APPS.map((app) => (
                <button
                    key={app.name}
                    type="button"
                    aria-label={app.name}
                    className={`relative flex w-[49px] items-center justify-center ${app.active ? 'bg-[#454340]' : ''}`}
                >
                    {app.icon}
                    {(app.active || app.open) && (
                        <span className={`absolute bottom-0 h-[2px] bg-[#a9cdf2] ${app.active ? 'w-full' : 'w-[40px]'}`} />
                    )}
                </button>
            ))}
        </div>
        <div className="ml-auto flex items-center">
            <svg width="24" height="22" viewBox="0 0 24 22">
                <circle cx="11" cy="11" r="10" fill="#1a9ad7" stroke="#fff" strokeWidth="1.500" />
                <path d="M7.500 8.500c0-5 7-4.500 7-.8 0 2.800-3.300 2.600-3.300 5.600M11.200 15v2" fill="none" stroke="#fff" strokeWidth="2.200" />
                <circle cx="19" cy="16.500" r="4.800" fill="#f3ad2c" />
                <path d="M19 14v5" stroke="#fff" strokeWidth="1.400" />
            </svg>
            <svg width="16" height="16" viewBox="0 0 16 16" className="ml-[22px]" fill="none" stroke="#fff" strokeWidth="1.200">
                <circle cx="5" cy="7" r="2.500" /><circle cx="11" cy="3.500" r="2.500" />
                <path d="M1 15c0-7 8-7 8-1M8 9c1-4 7-4 7 1" />
            </svg>
            <svg width="12" height="7" viewBox="0 0 12 7" className="ml-[22px]" fill="none" stroke="#fff" strokeWidth="1.300"><path d="M.5 6.500L6 1l5.500 5.500" /></svg>
            <FaDropbox size={15} className="ml-[10px]" />
            <svg width="15" height="9" viewBox="0 0 15 9" className="ml-[10px]">
                <path d="M.5.5h12v8H.5z" fill="none" stroke="#fff" /><path d="M2 2h6v5H2zM13 3h2v3h-2z" fill="#fff" />
            </svg>
            <svg width="13" height="13" viewBox="0 0 13 13" className="ml-[11px]" fill="none" stroke="#fff">
                <path d="M5 12c0-4 3-7 7-7M8 12c0-2 2-4 4-4" /><path d="M.5 12C.5 5 5 .5 12 .5M2.800 12c0-5 4-9 9.200-9" opacity=".5" /><circle cx="11.500" cy="11.500" r="1" fill="#fff" />
            </svg>
            <svg width="15" height="12" viewBox="0 0 15 12" className="ml-[8px]" fill="none" stroke="#fff">
                <path d="M.5 4v4H3l3 3.500V.5L3 4zM9 4l4.500 4.500M13.500 4L9 8.500" />
            </svg>
            <div className="w-[74px] text-center leading-[18px]">
                <div>12:06</div>
                <div>16-1-2018</div>
            </div>
            <svg width="17" height="17" viewBox="0 0 17 17" className="ml-[7px]">
                <path d="M0 0h16v12H7l-3 4v-4H0z" fill="#fff" />
                <path d="M3 3.500h10M3 6.500h10M3 9.500h5" stroke="#15130f" />
                <circle cx="12.500" cy="12" r="4" fill="#15130f" />
                <path d="M12 9a3.200 3.200 0 1 0 3.500 4.500A3.500 3.500 0 0 1 12 9z" fill="#fff" />
            </svg>
            <span className="ml-[19px] mr-[4px] h-[40px] w-px bg-[#77746f]" />
        </div>
    </div>
);

export default function App() {
    return (
        <div className="relative flex min-h-screen flex-col overflow-hidden bg-[#e6e6e6] font-['Open_Sans',sans-serif] text-[11px]">
            <TitleBar />
            <Ribbon />
            <Breadcrumbs />
            <div className="flex min-h-0 flex-1">
                <aside className="w-[31px] shrink-0 pt-[7px] text-[#444]">
                    <SideTab side="left" label="Toolbox" className="h-[46px] justify-center pl-[3px]" />
                    <SideTab side="left" label="Model Views" icon={<BrowserIcon folder lens />} className="mt-[20px] h-[87px] pl-[3px]" />
                </aside>
                <DiagramPanel />
                <div className="w-[7px] shrink-0 border-r border-[#d0d0d0]" />
                <DocumentPanel />
                <aside className="w-[31px] shrink-0 border-l border-[#ddd] pt-[7px] text-[#444]">
                    <SideTab side="right" label="Start" className="h-[27px] justify-center pr-[8px]" />
                    <SideTab side="right" label="Element Browser" icon={<BrowserIcon doc lens />} className="mt-[20px] h-[111px] pr-[8px]" />
                    <SideTab side="right" label="Project Browser" icon={<BrowserIcon folder />} className="mt-[20px] h-[104px] pr-[8px]" />
                </aside>
            </div>
            <StatusBar />
            <Taskbar />
            <SelectorDialog />
            <StyleDialog />
        </div>
    );
}
